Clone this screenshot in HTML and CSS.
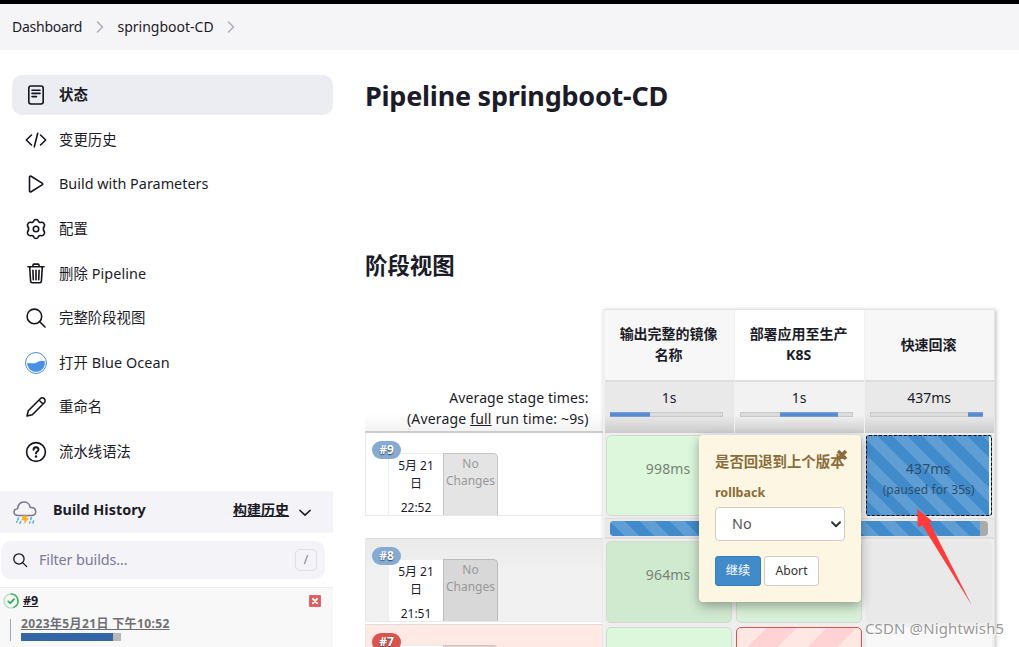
FILE: index.html
```html
<!DOCTYPE html>
<html lang="zh-CN">
<head>
<meta charset="utf-8">
<title>springboot-CD</title>
<link rel="stylesheet" href="styles.css">
</head>
<body>
<header class="crumbs">
  <span class="crumb-home">Dashboard</span>
  <svg class="crumb-sep" width="8" height="12" viewBox="0 0 8 12"><path d="M1.5 1 6.5 6l-5 5"/></svg>
  <span class="crumb-job">springboot-CD</span>
  <svg class="crumb-sep" width="8" height="12" viewBox="0 0 8 12"><path d="M1.5 1 6.5 6l-5 5"/></svg>
</header>
<div class="layout">
  <aside class="side">
    <nav class="tasks">
      <a class="task active"><svg class="ico" viewBox="0 0 24 24"><rect x="4.8" y="3" width="14.4" height="18" rx="2.2"/><path d="M8 7.2h8M8 10.4h8M8 13.6h4.5"/></svg><span>状态</span></a>
      <a class="task"><svg class="ico" viewBox="0 0 24 24"><path d="M7.5 7 2.3 12l5.2 5M16.5 7l5.200 5-5.200 5M13.700 5.300l-3.400 13.400"/></svg><span>变更历史</span></a>
      <a class="task"><svg class="ico" viewBox="0 0 24 24"><path d="M5.500 5.200v13.600c0 1 .8 1.400 1.600.9l11-6.800c.8-.5.8-1.300 0-1.800L7.100 4.300C6.300 3.800 5.500 4.200 5.500 5.200z"/></svg><span class="latin">Build with Parameters</span></a>
      <a class="task"><svg class="ico" viewBox="0 0 24 24"><path d="M10 3.500c.5-1.300 3.500-1.300 4 0 .5 1.700 1.800 2.300 3.400 1.800 1.700-.5 3.800 2.200 3 3.700-1.300 1.800-1.300 4.200 0 6 .8 1.500-1.300 4.200-3 3.700-1.600-.5-2.900.1-3.400 1.800-.5 1.300-3.500 1.300-4 0-.5-1.700-1.800-2.300-3.400-1.800-1.700.5-3.800-2.200-3-3.700 1.300-1.800 1.300-4.200 0-6-.8-1.500 1.300-4.200 3-3.700 1.600.5 2.900-.1 3.400-1.800z"/><circle cx="12" cy="12" r="2.700"/></svg><span>配置</span></a>
      <a class="task"><svg class="ico" viewBox="0 0 24 24"><path d="M4 4.800h16M5.700 4.800l.9 14.400c.1 1 .7 1.600 1.600 1.600h7.600c.9 0 1.500-.6 1.600-1.600l.9-14.400M9 4.600V3c0-.5.4-.9.900-.9h4.200c.5 0 .9.400.9.900v1.600M12 8.300v9.500M8.900 8.300l.4 9.500M15.100 8.300l-.4 9.500"/></svg><span class="mixed">删除 Pipeline</span></a>
      <a class="task"><svg class="ico" viewBox="0 0 24 24"><circle cx="10.400" cy="10.400" r="7.300"/><path d="m15.700 15.700 5.300 5.300"/></svg><span>完整阶段视图</span></a>
      <a class="task"><svg class="ico ocean" viewBox="0 0 24 24"><circle cx="12" cy="12" r="10.500"/><path d="M3.500 12.500c3-.9 5 1 8.500-.5 3-1.400 4.500-2.600 8.600-1.500.7 6-3.100 10.100-8.600 10.100-4.500 0-8-3.100-8.500-8.100z"/></svg><span class="mixed">打开 Blue Ocean</span></a>
      <a class="task"><svg class="ico" viewBox="0 0 24 24"><path d="M3 21l1.300-5.300L16.800 3.200c2.400-1.500 5.400 1.300 4 4L8.300 19.700zM15 5l4 4"/></svg><span>重命名</span></a>
      <a class="task"><svg class="ico" viewBox="0 0 24 24"><circle cx="12" cy="12" r="9.400"/><path class="thick" d="M9.500 9.700c.2-3.400 5.100-3 5 0-.1 1.800-2.500 1.800-2.500 3.700"/><circle class="dot" cx="12" cy="16.500" r="1.200"/></svg><span>流水线语法</span></a>
    </nav>
    <div class="history-head">
      <svg class="weather" width="24" height="24" viewBox="0 0 24 24"><path class="cloud" d="M5.500 14.500C-.5 14.500-.2 8.200 4.600 7.700 5.500-.7 16-1.200 17.300 6.600c6.500-.6 7.500 7.900 1.200 7.900z"/><path class="bolt" d="M10 14.500h4.500l-1.200 2.800h3L10.600 23.200l1.200-4H8.300z"/><path class="rain" d="m5.500 17-.8 2M7.700 20.500l-.8 2M4 20.500l-.3.700M18.500 16.500l-.8 2M20.500 20l-.5 2M17 21l-.4 1"/></svg>
      <strong class="history-title">Build History</strong>
      <a class="trend">构建历史</a>
      <svg class="caret" width="12" height="8" viewBox="0 0 12 8"><path d="m1 1.500 5 4.700 5-4.700"/></svg>
    </div>
    <div class="filter">
      <svg class="filter-ico" viewBox="0 0 24 24"><circle cx="10.400" cy="10.400" r="7.700"/><path d="m16 16 6 6"/></svg>
      <span class="filter-text">Filter builds...</span>
      <kbd>/</kbd>
    </div>
    <div class="build">
      <div class="build-top">
        <svg width="16" height="16" viewBox="0 0 16 16"><circle class="ring" cx="8" cy="8" r="7"/><path class="ring-arc" d="M8 1a7 7 0 0 1 3 13.300"/><path class="tick" d="m5.200 8.300 2 2 3.800-4.200"/></svg>
        <a class="build-no">#9</a>
        <svg class="stop" width="12" height="12" viewBox="0 0 12 12"><rect width="12" height="12" rx="1"/><path d="m3.900 3.900 4.200 4.200m0-4.200-4.200 4.200"/></svg>
      </div>
      <div class="build-detail">
        <a class="build-date">2023年5月21日 下午10:52</a>
        <div class="build-bar"><i></i></div>
      </div>
    </div>
  </aside>
  <main class="main">
    <h1>Pipeline springboot-CD</h1>
    <h2>阶段视图</h2>
    <section class="pipeline">
      <div class="runs">
        <div class="averages"><span class="avg-a">Average stage times:</span><span class="avg-b">(Average <u>full</u> run time: ~9s)</span></div>
        <div class="run run9"><b class="badge">#9</b><div class="when"><span>5月 21<br>日</span><time>22:52</time></div><div class="changes">No<br>Changes</div></div>
        <div class="run run8"><b class="badge">#8</b><div class="when"><span>5月 21<br>日</span><time>21:51</time></div><div class="changes">No<br>Changes</div></div>
        <div class="run run7"><b class="badge">#7</b><div class="when"></div><div class="changes"></div></div>
      </div>
      <div class="stages">
        <div class="st-row heads"><div>输出完整的镜像<br>名称</div><div>部署应用至生产<br>K8S</div><div>快速回滚</div></div>
        <div class="st-row times">
          <div><span>1s</span><p class="meter m1"><i></i></p></div>
          <div><span>1s</span><p class="meter m2"><i></i></p></div>
          <div><span>437ms</span><p class="meter m3"><i></i></p></div>
        </div>
        <div class="st-row cells r9">
          <div class="ok"><span>998ms</span></div><div class="ok"></div>
          <div class="paused"><span>437ms</span><small>(paused for 35s)</small></div>
        </div>
        <div class="progress"><div><i></i></div></div>
        <div class="st-row cells r8"><div class="ok dim"><span>964ms</span></div><div class="ok mid"></div><div class="blank"></div></div>
        <div class="st-row cells r7"><div class="ok"></div><div class="failed"></div><div class="none"></div></div>
      </div>
    </section>
  </main>
</div>
<div class="popover">
  <svg class="close" width="12" height="12" viewBox="0 0 12 12"><path d="m2 2 8 8m0-8-8 8"/></svg>
  <strong class="pop-title">是否回退到上个版本</strong>
  <strong class="pop-label">rollback</strong>
  <div class="select"><span>No</span><svg width="10" height="7" viewBox="0 0 10 7"><path d="m1 1.200 4 4 4-4"/></svg></div>
  <div class="actions"><span class="btn primary">继续</span><span class="btn abort">Abort</span></div>
</div>
<svg class="arrow" width="56" height="98" viewBox="0 0 56 98"><path d="M1.300 1 15.700 12.700 13.700 14.700 55.700 97 6.300 17.300 1.700 19.300z"/></svg>
<div class="watermark">CSDN @Nightwish5</div>
</body>
</html>
```
FILE: styles.css
```css
* { box-sizing: border-box; }
html { overflow: hidden; }
body { margin: 0; width: 1019px; height: 647px; overflow: hidden; position: relative; background: #fff; color: #1c1c28; font-family: "Noto Sans", "Noto Sans CJK SC", sans-serif; font-size: 14px; line-height: 21px; }
svg { display: block; fill: none; stroke: currentColor; stroke-linecap: round; stroke-linejoin: round; flex: none; }
span, a, time { white-space: nowrap; }
.crumbs { height: 50px; border-top: 4px solid #000; background: #f5f5f8; display: flex; align-items: center; padding-left: 12px; }
.crumb-home { width: 84px; letter-spacing: -0.25px; padding-bottom: 2px; }
.crumb-sep { stroke: #aaaabd; stroke-width: 1.4; }
.crumb-job { width: 109px; margin-left: 13.500px; padding-bottom: 2px; }
.crumb-job + .crumb-sep { margin-left: .5px; }
.layout { display: flex; height: 597px; overflow: hidden; }
.side { width: 333px; padding-top: 25px; flex: none; }
.tasks { margin-left: 12px; display: flex; flex-direction: column; gap: 4.640px; height: 416px; }
.task { height: 40px; border-radius: 10px; display: flex; flex: none; align-items: center; gap: 11px; padding-left: 12px; font-size: 14.400px; }
.task span { padding-bottom: 1px; }
.task .latin { padding-bottom: 2px; }
.task .mixed { letter-spacing: .08px; padding-bottom: 0; }
.task.active { background: #ecedf3; font-weight: 700; }
.ico { width: 24px; height: 24px; stroke-width: 1.600; color: #14141f; }
.ico .thick { stroke-width: 1.900; }
.ico .dot { fill: currentColor; stroke: none; }
.ocean circle { stroke: #4a90e2; stroke-width: 1; }
.ocean path { fill: #4a90e2; stroke: #4a90e2; stroke-width: .5; }
.history-head { height: 42px; background: #f3f3f8; display: flex; align-items: center; padding: 0 22px 5px 13px; }
.weather { margin-top: 6px; }
.cloud { stroke: #77778e; stroke-width: 1.500; }
.bolt { fill: #fdb022; stroke: none; }
.rain { stroke: #45b4eb; stroke-width: 1.500; }
.history-title { margin-left: 16px; width: 180px; font-size: 14.400px; }
.trend { font-size: 14px; font-weight: 700; text-decoration: underline; }
.caret { margin: 6px 0 0 auto; stroke-width: 1.700; }
.filter { height: 38px; width: 324px; margin: 8px 0 0 1px; border-radius: 10px; background: #f3f3f8; display: flex; align-items: center; padding: 0 8px 0 11px; color: #7a7a96; }
.filter-ico { width: 16px; height: 16px; stroke-width: 1.900; color: #14141f; }
.filter-text { margin-left: 11px; padding-bottom: 2px; font-size: 14.400px; letter-spacing: -0.120px; }
kbd { margin-left: auto; width: 22px; height: 22px; border: 1px solid #dedee8; border-radius: 5px; font: 12px/20px "Noto Sans", sans-serif; text-align: center; }
.build { margin-top: 8px; height: 60px; background: #f8f8f8; border-top: 1px solid #eee; padding: 5px 0 0 3px; }
.build-top { display: flex; align-items: center; height: 16px; padding-right: 12px; }
.ring { stroke: #b7e4c2; stroke-width: 1.500; }
.ring-arc { stroke: #43b765; stroke-width: 1.500; }
.tick { stroke: #1ea64b; stroke-width: 1.600; }
.build-no { margin-left: 4px; font-size: 12.500px; font-weight: 700; text-decoration: underline; padding-bottom: 1px; }
.stop { margin-left: auto; }
.stop rect { fill: #df5c60; stroke: #d6888b; stroke-width: .5; }
.stop path { stroke: #fff; stroke-width: 2; }
.build-detail { margin: 10px 0 0 7px; height: 22px; border-left: 1px solid #9ba8bc; padding-left: 10px; }
.build-date { display: block; line-height: 10px; height: 14px; font-size: 12px; letter-spacing: .37px; font-weight: 700; text-decoration: underline; color: #6f6f73; }
.build-bar { width: 100px; height: 8px; background: #b8b8b8; }
.build-bar i { display: block; width: 92px; height: 8px; background: #3465a4; }
.main { padding-left: 32px; width: 686px; flex: none; }
h1 { margin: 0; padding-top: 26px; height: 195px; font-size: 27px; letter-spacing: -0.250px; line-height: 40px; font-weight: 700; white-space: nowrap; }
h2 { margin: 0; height: 64px; font-size: 22.400px; line-height: 41px; }
.pipeline { display: flex; width: 630px; height: 338px; }
.runs { width: 238px; }
.averages { height: 124px; padding: 78px 14px 0 0; display: flex; flex-direction: column; align-items: flex-end; background: linear-gradient(#fff 85%, #f3f3f3); border-bottom: 2px solid #ccc; }
.avg-a { letter-spacing: .1px; }
.avg-b { letter-spacing: .18px; }
.run { height: 83px; border: 1px solid #e8e8e8; border-top: 0; padding: 20px 0 0 22px; display: flex; position: relative; }
.run8 { margin-top: 22px; height: 84px; background: linear-gradient(#eaeaea, #f1f1f1 40%); border-top: 1px solid #ddd; }
.run7 { margin-top: 2px; height: 90px; background: #ffe9e5; border-top: 1px solid #e1dcdc; }
.badge { position: absolute; left: 6px; top: 8px; width: 29px; height: 18px; border-radius: 9px; background: #86abd2; color: #fff; font-size: 12px; line-height: 17px; text-align: center; text-shadow: 0 1px 1px #345; }
.run7 .badge { background: #d9534f; }
.when { width: 55px; border: 1px solid #eee; border-width: 1px 0 0 1px; background: #fff; font-size: 12px; line-height: 18px; text-align: center; padding-top: 3px; display: flex; flex-direction: column; }
.when time { margin-top: 6px; }
.changes { width: 55px; border: 1px solid #c5c5c5; border-bottom: 0; border-radius: 0 5px 0 0; background: #e4e4e4; color: #999; font-size: 12px; line-height: 17px; text-align: center; padding-top: 1px; }
.run8 .changes { background: #d8d8d8; border-color: #bbb; }
.run7 .changes { background: #e4d1ce; }
.stages { width: 393px; padding: 0 0 0 2px; border: 1px solid #e5e5e5; border-width: 1px 1px 0 0; box-shadow: 1px 1px 4px #bbb; background: #f0f0f0; }
.st-row { display: grid; grid-template-columns: 129px 129px 129px; gap: 1px; }
.heads > div { height: 70px; padding: 0 1px 2px 0; background: #f7f7f7; display: flex; align-items: center; justify-content: center; text-align: center; font-weight: 700; white-space: nowrap; }
.heads > div:nth-child(2) { background: #fff; }
.times > div { height: 53px; border-top: 2px solid #ddd; background: linear-gradient(#e9e9e9 65%, #ccc); display: flex; flex-direction: column; align-items: center; padding: 5px 0 0; }
.times > div:nth-child(2) { background: linear-gradient(#f2f2f2 65%, #ccc); }
.meter { width: 113px; height: 5px; margin: 4px 6px 0 0; background: #dcdcdc; border: 1px solid #c9c9c9; }
.meter i { display: block; height: 5px; margin-top: -1px; background: linear-gradient(#77a4da, #4c80ca 60%, #82abda); }
.m1 i { width: 40px; margin-left: -1px; }
.m2 i { width: 58px; margin-left: 39px; }
.m3 i { width: 15px; margin-left: 97px; }
.cells { background: #eee; }
.cells > div { border: 1px solid #d4d9d4; border-radius: 5px; margin: 2px 2px 2px 1px; display: flex; flex-direction: column; align-items: center; color: #748576; }
.cells > div > span { letter-spacing: .15px; margin-right: 1px; }
.r9 > div { height: 81px; padding-top: 22px; }
.ok { background: #ddf7dc; }
.dim { background: #d0ead0; }
.mid { background: #d7f0d7; }
.cells .paused { border: 1px dashed #000; border-radius: 3px; background: linear-gradient(#f5f5f5, #f5f5f5) right / 2px 100% no-repeat padding-box, repeating-linear-gradient(45deg, #428bca 0 10.600px, #5f9ed4 10.600px 21.200px); color: #2c4f70; }
.paused small { font-size: 12px; line-height: 22px; letter-spacing: .08px; white-space: nowrap; }
.progress { height: 21px; background: #e9e9e9; border: 1px solid #ddd; border-width: 1px 0 2px; padding: 2px 5px 0; }
.progress div { width: 378px; height: 15px; border-radius: 4px; background: #aaa; overflow: hidden; }
.progress i { display: block; width: 370px; height: 15px; background: repeating-linear-gradient(45deg, #428bca 0 10.600px, #5f9ed4 10.600px 21.200px); }
.r8 > div { height: 82px; padding-top: 22px; }
.cells .blank { background: #e9e9e9; border-color: #e9e9e9; }
.cells .none { background: #f8f8f8; border-color: #f8f8f8; }
.r7 > div { height: 80px; }
.cells .failed { border-color: #d9534f; background: repeating-linear-gradient(135deg, #ffe8e4 0 21.200px, #ffd3d3 21.200px 42.400px); }
.popover { position: absolute; left: 699px; top: 435px; width: 162px; height: 167px; padding: 16px; background: #fcf6e2; border-radius: 4px; box-shadow: 0 4px 12px #0005; color: #8a6d3b; display: flex; flex-direction: column; }
.pop-title { height: 31px; line-height: 22px; font-size: 14.400px; white-space: nowrap; }
.pop-label { height: 25px; font-size: 12.500px; }
.close { position: absolute; right: 13px; top: 14px; stroke-width: 3.500; stroke-linecap: butt; }
.select { height: 34px; border: 1px solid #ccc; border-radius: 4px; background: #fff; color: #555; padding: 0 3px 0 16px; display: flex; align-items: center; justify-content: space-between; font-size: 14.400px; }
.select span { padding-bottom: 2px; }
.select svg { color: #333; stroke-width: 2; }
.actions { margin-top: 15px; display: flex; gap: 3px; }
.btn { height: 30px; border: 1px solid #ccc; border-radius: 3px; background: #fff; color: #333; font-size: 12.200px; line-height: 28px; text-align: center; }
.primary { width: 46px; background: #428bca; border-color: #357ebd; color: #fff; }
.abort { width: 55px; }
.arrow { position: absolute; left: 916px; top: 508px; fill: #ff3b3b; stroke: none; }
.watermark { position: absolute; left: 865px; top: 617px; font: 15px/22px "Noto Sans", sans-serif; letter-spacing: .12px; color: #888d; text-shadow: 1px 1px 0 #fff; white-space: nowrap; }
```
